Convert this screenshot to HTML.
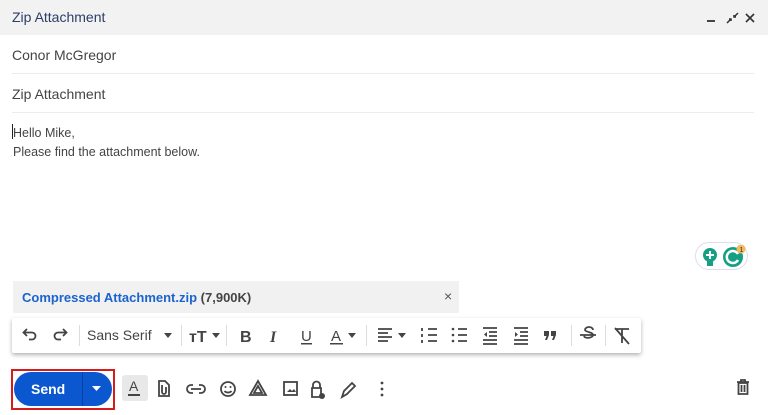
<!DOCTYPE html>
<html><head><meta charset="utf-8"><style>
*{margin:0;padding:0;box-sizing:border-box}
body{width:768px;height:415px;background:#fff;font-family:"Liberation Sans",Arial,sans-serif;position:relative;overflow:hidden}
.a{position:absolute}
.hdr{left:0;top:0;width:768px;height:35px;background:#f2f2f2}
.t{font-size:14px;color:#444}
.line{height:1px;background:#ececec;left:12px;width:742px}
svg{position:absolute}
.ic{stroke:#444;stroke-width:1.8;fill:none}
.f{fill:#444}
</style></head><body>
<div class="a hdr"></div>
<div class="a" style="left:12px;top:9px;font-size:14px;color:#2c3e66">Zip Attachment</div>
<svg style="left:705px;top:11px" width="50" height="14">
<rect x="2" y="9" width="8" height="2" class="f"/>
<path d="M22 12 L26 8 M24 8h2v2 M33 2 L29 6 M29 4v2h2" stroke="#333" stroke-width="1.5" fill="none"/>
<path d="M41 3 L49 11 M49 3 L41 11" stroke="#333" stroke-width="1.6"/>
</svg>
<div class="a t" style="left:12px;top:47px">Conor McGregor</div>
<div class="a line" style="top:73px"></div>
<div class="a t" style="left:12px;top:86px">Zip Attachment</div>
<div class="a line" style="top:112px"></div>
<div class="a" style="left:12px;top:124px;width:1px;height:15px;background:#222"></div>
<div class="a" style="left:13px;top:124px;font-size:12.5px;color:#444;line-height:19px">Hello Mike,<br>Please find the attachment below.</div>
<div class="a" style="left:695px;top:242px;width:53px;height:28px;border:1px solid #dde;border-radius:14px"></div>
<svg style="left:700px;top:245px" width="50" height="25">
<circle cx="10" cy="10" r="7" fill="#15a085"/><rect x="7" y="16" width="6" height="5" fill="#15a085"/>
<path d="M10 6v8M6 10h8" stroke="#fff" stroke-width="2"/>
<circle cx="33" cy="12" r="10" fill="#15a085"/>
<path d="M38 9a6 6 0 1 0 0 6" stroke="#fff" stroke-width="2.5" fill="none"/>
<circle cx="41" cy="4" r="4.5" fill="#f3b95f"/>
<text x="39.5" y="7" font-size="7" fill="#333" font-family="Liberation Sans">1</text>
</svg>
<div class="a" style="left:13px;top:281px;width:446px;height:32px;background:#f1f1f1"></div>
<div class="a" style="left:22px;top:290px;font-size:13px;font-weight:bold;color:#1a63d0">Compressed Attachment.zip <span style="color:#444">(7,900K)</span></div>
<div class="a" style="left:444px;top:288px;font-size:14px;color:#555">×</div>
<div class="a" style="left:12px;top:318px;width:629px;height:35px;background:#fff;box-shadow:0 2px 4px rgba(0,0,0,.3);border-radius:2px"></div>
<svg style="left:12px;top:318px" width="630" height="35">
<path d="M15 11 l-3.5 3.5 3.5 3.5 M12 14.5h8a3.5 3.5 0 0 1 0 7h-3" class="ic" stroke-width="1.6"/>
<path d="M51 11 l3.5 3.5 -3.5 3.5 M54 14.5h-8a3.5 3.5 0 0 0 0 7h3" class="ic" stroke-width="1.6"/>
<rect x="67" y="7" width="1" height="21" fill="#ddd"/>
<text x="75" y="22" font-size="14" fill="#444" font-family="Liberation Sans">Sans Serif</text>
<path d="M152 15h8l-4 5z" class="f"/>
<rect x="169" y="7" width="1" height="21" fill="#ddd"/>
<text x="177" y="24" font-size="16" font-weight="bold" fill="#444" font-family="Liberation Sans">тT</text>
<path d="M200 15h8l-4 5z" class="f"/>
<rect x="214" y="7" width="1" height="21" fill="#ddd"/>
<text x="228" y="24" font-size="16" font-weight="bold" fill="#444" font-family="Liberation Sans">B</text>
<text x="258" y="24" font-size="16" font-weight="bold" font-style="italic" fill="#444" font-family="Liberation Serif">I</text>
<text x="289" y="23" font-size="15" fill="#444" font-family="Liberation Sans">U</text><rect x="289" y="25" width="11" height="1.5" class="f"/>
<text x="319" y="23" font-size="15" fill="#444" font-family="Liberation Sans">A</text><rect x="318" y="25" width="13" height="1.5" class="f"/>
<path d="M336 15h8l-4 5z" class="f"/>
<rect x="354" y="7" width="1" height="21" fill="#ddd"/>
<path d="M366 11h14M366 15h10M366 19h14M366 23h10" class="ic" stroke-width="1.6"/>
<path d="M386 15h8l-4 5z" class="f"/>
<path d="M416 11h9M416 17h9M416 23h9" class="ic" stroke-width="1.6"/><path d="M410 10v3M410 16v3M410 22v3" class="ic" stroke-width="1.2"/>
<path d="M446 11h9M446 17h9M446 23h9" class="ic" stroke-width="1.6"/><circle cx="441" cy="11" r="1.3" class="f"/><circle cx="441" cy="17" r="1.3" class="f"/><circle cx="441" cy="23" r="1.3" class="f"/>
<path d="M471 10h14M477 14h8M477 18h8M471 22h14M471 26h14" class="ic" stroke-width="1.4"/><path d="M475 14v5l-3-2.5z" class="f"/>
<path d="M502 10h14M508 14h8M508 18h8M502 22h14M502 26h14" class="ic" stroke-width="1.4"/><path d="M503 14v5l3-2.5z" class="f"/>
<path d="M532 13h5v4l-2 5h-2l1.5-4h-2.5z M539 13h5v4l-2 5h-2l1.5-4h-2.5z" class="f"/>
<rect x="559" y="7" width="1" height="21" fill="#ddd"/>
<path d="M568 17h16M581 12a4 3 0 0 0-8 0c0 2 8 2 8 5s-8 4-9 1" class="ic" stroke-width="1.6"/>
<rect x="593" y="7" width="1" height="21" fill="#ddd"/>
<path d="M603 11h14M610 11v14M603 10l14 16" class="ic" stroke-width="1.8"/>
</svg>
<div class="a" style="left:11px;top:369px;width:104px;height:41px;border:2px solid #d41c1c"></div>
<div class="a" style="left:14px;top:372px;width:98px;height:34px;background:#0b57d0;border-radius:17px"></div>
<div class="a" style="left:82px;top:372px;width:1px;height:34px;background:#0a3f9a"></div>
<div class="a" style="left:31px;top:381px;font-size:14px;font-weight:bold;color:#fff">Send</div>
<svg style="left:92px;top:386px" width="10" height="6"><path d="M0 0h9l-4.5 5z" fill="#fff"/></svg>
<div class="a" style="left:122px;top:375px;width:26px;height:26px;background:#e8e8e8;border-radius:3px"></div>
<svg style="left:120px;top:372px" width="280" height="32">
<text x="9" y="19" font-size="14" fill="#444" font-family="Liberation Sans">A</text><rect x="8" y="22" width="12" height="2" class="f"/>
<path d="M39 9h6l4 4v11h-10z M42 13v7a2 2 0 0 0 4 0v-5" class="ic" stroke-width="1.5"/>
<path d="M71 17h10 M73 13h-2a4 4 0 0 0 0 8h2 M79 13h2a4 4 0 0 1 0 8h-2" class="ic" stroke-width="1.6"/>
<circle cx="108" cy="17" r="7" class="ic" stroke-width="1.6"/><circle cx="105.5" cy="15" r="1" class="f"/><circle cx="110.5" cy="15" r="1" class="f"/><path d="M104.5 19a4 3 0 0 0 7 0" class="ic" stroke-width="1.4"/>
<path d="M138 9l8 14h-16z M138 14l4 7h-8z" class="ic" stroke-width="1.6"/>
<rect x="164" y="10" width="13" height="13" class="ic" stroke-width="1.6"/><path d="M167 20l3-3 2 2 2-2 2 3z" class="f"/>
<path d="M193 16v-3a3.5 3.5 0 0 1 7 0v3 M192 16h9v9h-9z" class="ic" stroke-width="1.6"/><circle cx="202" cy="24" r="3" class="f"/>
<path d="M222 25l2-6 8-8 3 3-8 8z" class="ic" stroke-width="1.6"/>
<circle cx="262" cy="11" r="1.4" class="f"/><circle cx="262" cy="17" r="1.4" class="f"/><circle cx="262" cy="23" r="1.4" class="f"/>
</svg>
<svg style="left:735px;top:378px" width="16" height="18"><path d="M2 4h12M6 4V2h4v2 M3.5 5h9v11h-9z M6.5 7v7M9.5 7v7" class="ic" stroke-width="1.6"/></svg>
</body></html>
